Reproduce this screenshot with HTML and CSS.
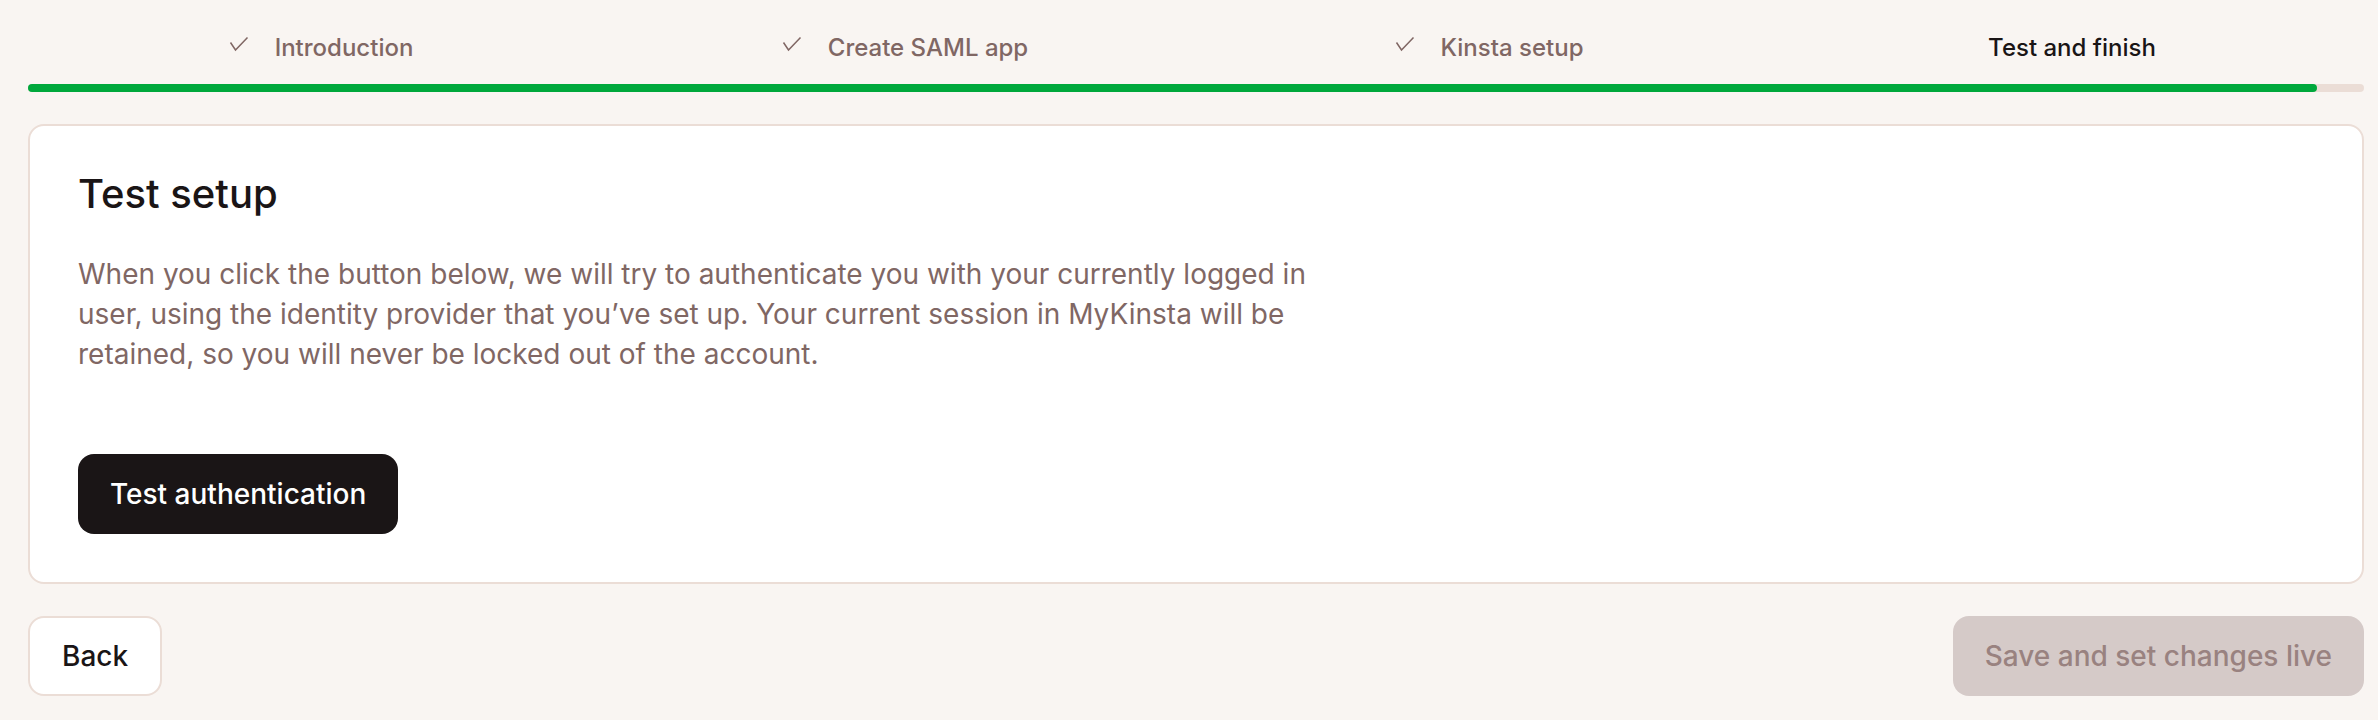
FILE: index.html
```html
<!DOCTYPE html>
<html lang="en">
<head>
  <meta charset="UTF-8" />
  <title>SAML setup - Test and finish</title>
  <link rel="stylesheet" href="styles.css">
</head>
<body>
  <main class="wizard">
    <header>
      <ol class="steps">
        <li class="step">
          <svg class="check" viewBox="0 0 24 24" aria-hidden="true"><path d="M3.5 10.5l5 7.5L20.5 5.5" /></svg>Introduction
        </li>
        <li class="step">
          <svg class="check" viewBox="0 0 24 24" aria-hidden="true"><path d="M3.5 10.5l5 7.5L20.5 5.5" /></svg>Create SAML app
        </li>
        <li class="step">
          <svg class="check" viewBox="0 0 24 24" aria-hidden="true"><path d="M3.5 10.5l5 7.5L20.5 5.5" /></svg>Kinsta setup
        </li>
        <li class="step current" aria-current="step">Test and finish</li>
      </ol>
      <div class="progress">
        <div class="progress-fill" style="width: 98%;"></div>
      </div>
    </header>

    <section class="card">
      <h1>Test setup</h1>
      <p>When you click the button below, we will try to authenticate you with your currently logged in user, using the identity provider that you’ve set up. Your current session in MyKinsta will be retained, so you will never be locked out of the account.</p>
      <button class="btn btn-primary" type="button">Test authentication</button>
    </section>

    <footer class="actions">
      <button class="btn btn-secondary" type="button">Back</button>
      <button class="btn btn-primary" type="button" disabled>Save and set changes live</button>
    </footer>
  </main>
</body>
</html>
```
FILE: styles.css
```css
* {
  box-sizing: border-box;
}
body {
  font-family: Inter, sans-serif;
  font-size: 28px;
  line-height: 40px;
  color: #1a1516;
  background: #f9f5f2;
  margin: 0;
}
.wizard {
  display: flex;
  flex-direction: column;
  gap: 32px;
  padding: 28px 14px 24px 28px;
}
.steps {
  display: grid;
  grid-template-columns: repeat(4, 1fr);
  list-style: none;
  margin: 0 0 16px;
  padding: 0;
}
.step {
  font-size: 24px;
  font-weight: 500;
  text-align: center;
  color: #806764;
}
.step.current {
  color: #1a1516;
}
.check {
  width: 24px;
  height: 24px;
  margin-right: 24px;
  fill: none;
  stroke: currentColor;
  stroke-width: 1.5;
}
.progress {
  height: 8px;
  border-radius: 4px;
  background: #ebddd6;
}
.progress-fill {
  height: 100%;
  border-radius: 4px;
  background: #00a83c;
}
.card {
  padding: 48px;
  background: #fff;
  border: 2px solid #ebddd6;
  border-radius: 16px;
}
.card h1 {
  font-size: 40px;
  font-weight: 500;
  line-height: 40px;
  margin: 0 0 40px;
}
.card p {
  max-width: 1280px;
  margin: 0 0 80px;
  color: #806764;
}
.actions {
  display: flex;
  justify-content: space-between;
}
.btn {
  display: block;
  font: inherit;
  font-weight: 500;
  padding: 20px 32px;
  border: none;
  border-radius: 16px;
  cursor: pointer;
}
.btn-primary {
  color: #fff;
  background: #1a1516;
}
.btn-secondary {
  color: #1a1516;
  background: #fff;
  padding: 18px 32px;
  border: 2px solid #ebddd6;
}
.btn:disabled {
  color: #998280;
  background: #d5cac8;
  cursor: default;
}
```
